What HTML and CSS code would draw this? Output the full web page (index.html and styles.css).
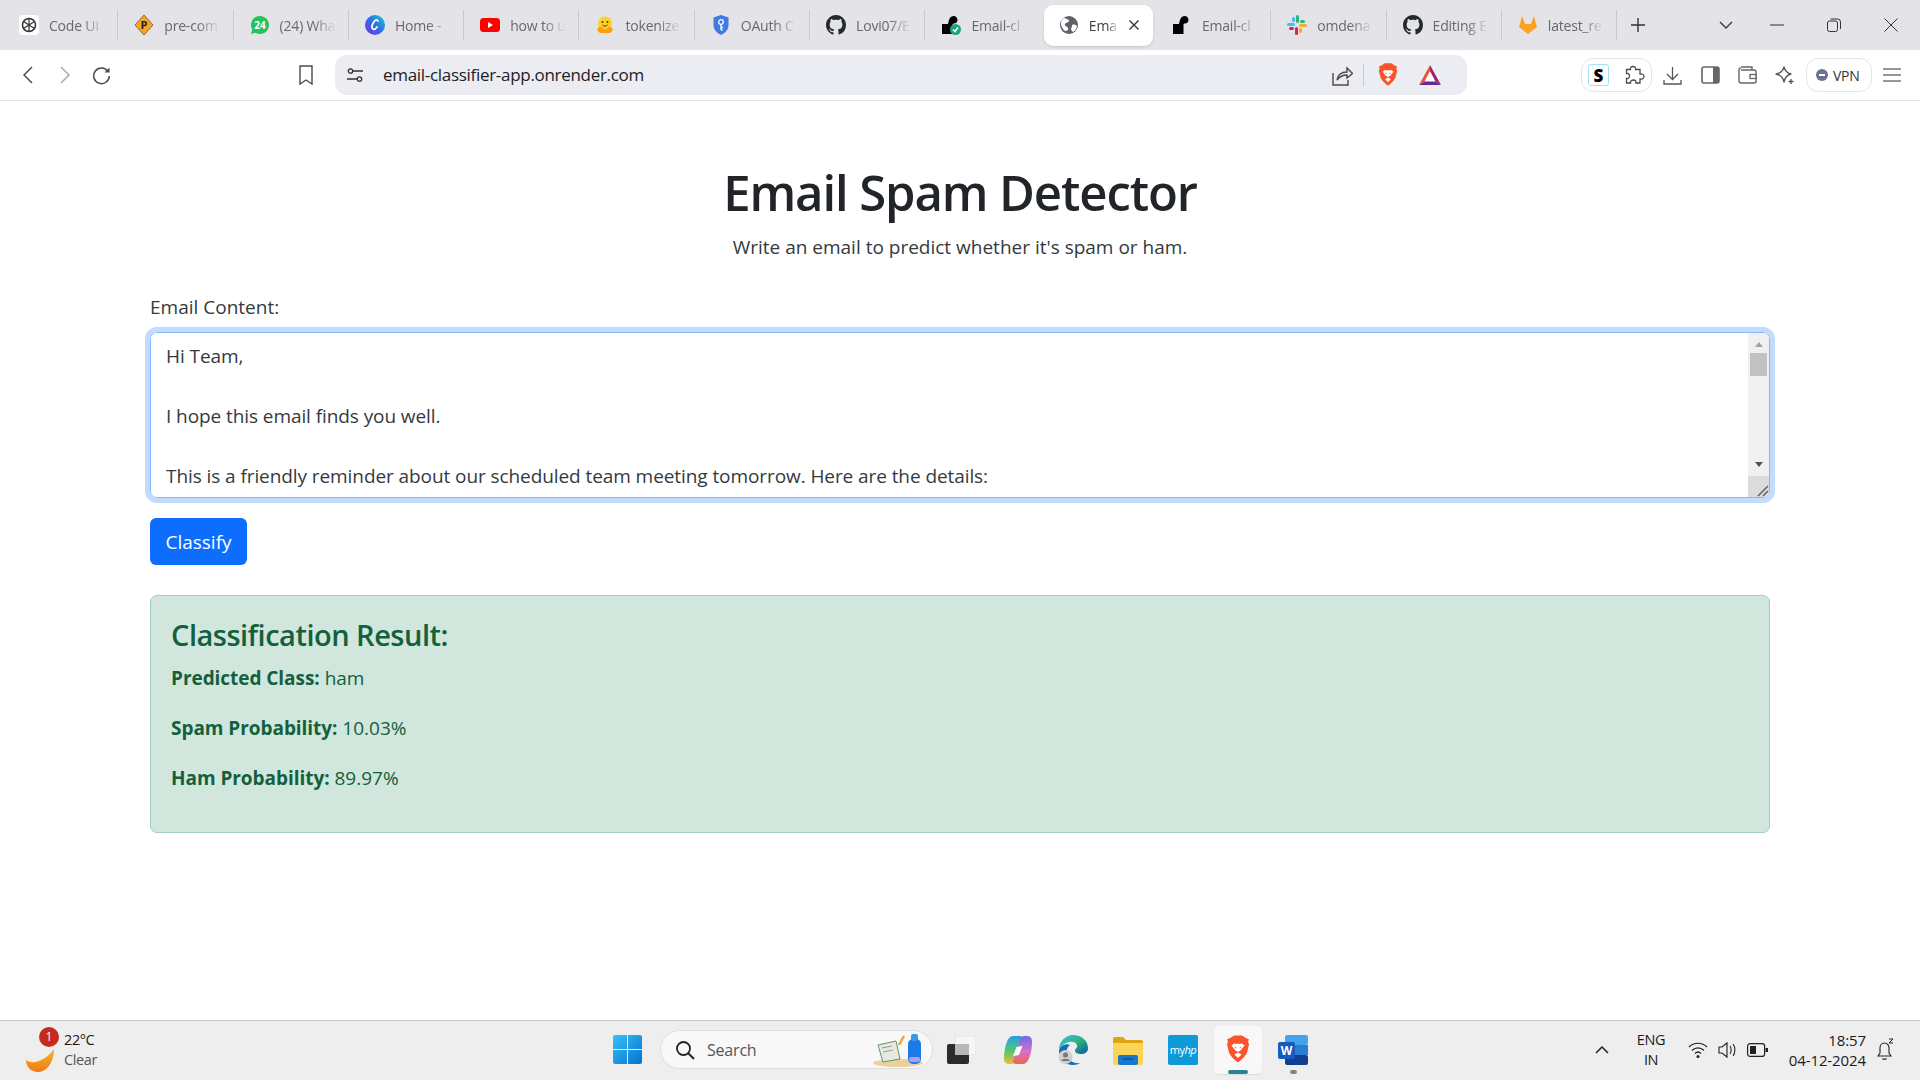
FILE: index.html
```html
<!DOCTYPE html>
<html lang="en">
<head>
    <meta charset="UTF-8">
    <title>Email Spam Detector</title>
    <link rel="stylesheet" href="styles.css">
</head>
<body>
    <svg class="defs" width="0" height="0">
        <symbol id="github" viewBox="0 0 16 16"><path fill="#24292f" d="M8 0C3.58 0 0 3.58 0 8c0 3.54 2.29 6.53 5.47 7.59.4.07.55-.17.55-.38 0-.19-.01-.82-.01-1.49-2.01.37-2.53-.49-2.69-.94-.09-.23-.48-.94-.82-1.13-.28-.15-.68-.52-.01-.53.63-.01 1.08.58 1.23.82.72 1.21 1.87.87 2.33.66.07-.52.28-.87.51-1.07-1.78-.2-3.64-.89-3.64-3.95 0-.87.31-1.59.82-2.15-.08-.2-.36-1.02.08-2.12 0 0 .67-.21 2.2.82.64-.18 1.32-.27 2-.27.68 0 1.36.09 2 .27 1.53-1.04 2.2-.82 2.2-.82.44 1.1.16 1.92.08 2.12.51.56.82 1.27.82 2.15 0 3.07-1.87 3.75-3.65 3.95.29.25.54.73.54 1.48 0 1.07-.01 1.93-.01 2.2 0 .21.15.46.55.38A8.013 8.013 0 0016 8c0-4.42-3.58-8-8-8z"/></symbol>
        <symbol id="render" viewBox="0 0 20 20"><path fill="#000" d="M1 9h6c.5-2 .6-3 1.400-5C9.200 2 11 1 12.500 1 15 1 16.500 3 16.500 5c0 2-1.500 3.500-3.500 3.500-1 0-1.500.5-1.500 1.500V19H1z"/></symbol>
        <symbol id="brave" viewBox="0 0 24 28"><path fill="#fb542b" d="M5 2 8 0h8l3 2 4 2-1 2 1 3-2 8c-1 3-6 8-9 10-3-2-8-7-9-10L1 9l1-3-1-2z"/><path fill="#fff" d="M12 16.500 9 14.500 5.500 10l2.500-2 3 .5 1-.5 1 .5 3-.5 2.500 2L15 14.500zM8.500 19l3.500-2 3.500 2-3.500 3.500z"/><path fill="#fb542b" d="M8 11l2.500 1-.5 1zM16 11l-2.500 1 .5 1z"/></symbol>
    </svg>

    <header class="tab-strip">
        <div class="tab">
            <svg class="fav" viewBox="0 0 20 20"><rect width="20" height="20" rx="4" fill="#fff"/><circle cx="10" cy="10" r="6.500" fill="none" stroke="#333" stroke-width="1.500"/><path d="M10 3.500v13M4.500 6.500l11 7M15.500 6.500l-11 7" stroke="#333" stroke-width="1.200"/></svg>
            <span class="tab-title">Code UI</span>
        </div>
        <div class="tab">
            <svg class="fav" viewBox="0 0 20 20"><path d="M10 0l9 10-9 10-9-10z" fill="#f4a62a" stroke="#7a5310" stroke-width=".8"/><text x="10" y="14" text-anchor="middle" class="svg-bold" font-size="11" fill="#222">P</text></svg>
            <span class="tab-title">pre-com</span>
        </div>
        <div class="tab">
            <svg class="fav" viewBox="0 0 20 20"><path d="M10 1a9 9 0 00-7.700 13.600L1 19l4.500-1.200A9 9 0 1010 1z" fill="#25c15a"/><text x="10" y="13.500" text-anchor="middle" class="svg-bold" font-size="10" fill="#fff">24</text></svg>
            <span class="tab-title">(24) Wha</span>
        </div>
        <div class="tab">
            <svg class="fav" viewBox="0 0 20 20"><defs><linearGradient id="canva" x1="0" y1="1" x2="1" y2="0"><stop offset="0" stop-color="#7d2ae8"/><stop offset=".5" stop-color="#2f6fe4"/><stop offset="1" stop-color="#19c8d6"/></linearGradient></defs><circle cx="10" cy="10" r="10" fill="url(#canva)"/><path d="M13 6c-1-2-3-1-4.500 1.500S6.500 13 8 14c1.500.8 3-.5 4-2" fill="none" stroke="#fff" stroke-width="1.700" stroke-linecap="round"/></svg>
            <span class="tab-title">Home -</span>
        </div>
        <div class="tab">
            <svg class="fav" viewBox="0 0 20 20"><rect y="3" width="20" height="14" rx="3.500" fill="#f00"/><path d="M8 7l5 3-5 3z" fill="#fff"/></svg>
            <span class="tab-title">how to u</span>
        </div>
        <div class="tab">
            <svg class="fav" viewBox="0 0 20 20"><circle cx="10" cy="8.500" r="7" fill="#ffd21e"/><path d="M2 15c1-3 3-4 4-3l4 3 4-3c1-1 3 0 4 3l-3 3H5z" fill="#ff9d0b"/><circle cx="7.500" cy="7" r="1" fill="#3a3b45"/><circle cx="12.500" cy="7" r="1" fill="#3a3b45"/><path d="M7.500 10c1.500 1.500 3.500 1.500 5 0" fill="none" stroke="#3a3b45"/></svg>
            <span class="tab-title">tokenize</span>
        </div>
        <div class="tab">
            <svg class="fav" viewBox="0 0 20 20"><path d="M10 0l7.500 2.500V10c0 5-4 8.500-7.500 10C6.500 18.500 2.500 15 2.500 10V2.500z" fill="#3f7be0"/><circle cx="10" cy="7" r="2.300" fill="none" stroke="#fff" stroke-width="1.300"/><path d="M10 9v6M10 12.500h2M10 15h1.500" stroke="#fff" stroke-width="1.300"/></svg>
            <span class="tab-title">OAuth C</span>
        </div>
        <div class="tab">
            <svg class="fav"><use href="#github"/></svg>
            <span class="tab-title">Lovi07/E</span>
        </div>
        <div class="tab no-sep">
            <svg class="fav" viewBox="0 0 20 20"><use href="#render" width="20" height="20"/><circle cx="14.500" cy="14.500" r="5.500" fill="#14a67c"/><path d="M12 14.500l2 2 3-4" fill="none" stroke="#fff" stroke-width="1.500"/></svg>
            <span class="tab-title">Email-cl</span>
        </div>
        <div class="tab active">
            <svg class="fav" viewBox="0 0 20 20"><circle cx="10" cy="10" r="9" fill="#5f6368"/><path d="M5 3c2 1 5 1 5 3s-3 1-4 3 2 2 3 4-1 3-3 3c-1-1-4-4-4-7s1-5 3-6zM13 10c2-1 4 0 5 1-.5 3-2 5-4 6-1-1-2-2-2-3s1-1 1-4z" fill="#fff"/></svg>
            <span class="tab-title short">Ema</span>
            <svg class="tab-close" viewBox="0 0 12 12"><path d="M1.500 1.500l9 9M10.500 1.500l-9 9" stroke="#333" stroke-width="1.400"/></svg>
        </div>
        <div class="tab">
            <svg class="fav"><use href="#render"/></svg>
            <span class="tab-title">Email-cl</span>
        </div>
        <div class="tab">
            <svg class="fav" viewBox="0 0 20 20"><rect x="0" y="8" width="8" height="3" rx="1.500" fill="#36c5f0"/><rect x="5" y="2" width="3" height="5" rx="1.500" fill="#36c5f0"/><rect x="9" y="0" width="3" height="8" rx="1.500" fill="#2eb67d"/><rect x="13" y="5" width="5" height="3" rx="1.500" fill="#2eb67d"/><rect x="12" y="9" width="8" height="3" rx="1.500" fill="#ecb22e"/><rect x="12" y="13" width="3" height="5" rx="1.500" fill="#ecb22e"/><rect x="8" y="12" width="3" height="8" rx="1.500" fill="#e01e5a"/><rect x="2" y="12" width="5" height="3" rx="1.500" fill="#e01e5a"/></svg>
            <span class="tab-title">omdena</span>
        </div>
        <div class="tab">
            <svg class="fav"><use href="#github"/></svg>
            <span class="tab-title">Editing E</span>
        </div>
        <div class="tab">
            <svg class="fav" viewBox="0 0 20 20"><path d="M10 19L1 12l1-3 2-8 3 8h6l3-8 2 8 1 3z" fill="#fca326"/></svg>
            <span class="tab-title">latest_re</span>
        </div>
        <button class="new-tab">
            <svg width="14" height="14" viewBox="0 0 14 14"><path d="M7 0v14M0 7h14" stroke="#333" stroke-width="1.400"/></svg>
        </button>
        <div class="window-controls">
            <svg class="chevron" width="14" height="8" viewBox="0 0 14 8"><path d="M1 1l6 6 6-6" fill="none" stroke="#444" stroke-width="1.500"/></svg>
            <div class="win-btn"><svg width="14" height="2" viewBox="0 0 14 2"><path d="M0 1h14" stroke="#333"/></svg></div>
            <div class="win-btn"><svg width="14" height="14" viewBox="0 0 14 14"><rect x=".5" y="3" width="10" height="10.500" rx="2" fill="none" stroke="#333"/><path d="M3.500 1h7a3 3 0 013 3v7" fill="none" stroke="#333"/></svg></div>
            <div class="win-btn"><svg width="14" height="14" viewBox="0 0 14 14"><path d="M.5.5l13 13M13.500.5l-13 13" stroke="#333"/></svg></div>
        </div>
    </header>

    <div class="toolbar">
        <div class="nav-btn"><svg width="10" height="18" viewBox="0 0 10 18"><path d="M9 1L1 9l8 8" fill="none" stroke="#4a4a4f" stroke-width="1.500"/></svg></div>
        <div class="nav-btn"><svg width="10" height="18" viewBox="0 0 10 18"><path d="M1 1l8 8-8 8" fill="none" stroke="#a8a8ad" stroke-width="1.500"/></svg></div>
        <div class="nav-btn"><svg width="19" height="19" viewBox="0 0 19 19"><path d="M16 5.500A7.800 7.800 0 1017.300 10" fill="none" stroke="#4a4a4f" stroke-width="1.500"/><path d="M17.500 1.500v5h-5z" fill="#4a4a4f"/></svg></div>
        <div class="nav-btn bookmark"><svg width="14" height="20" viewBox="0 0 14 20"><path d="M1 1h12v18l-6-4-6 4z" fill="none" stroke="#4a4a4f" stroke-width="1.400"/></svg></div>

        <div class="address-bar">
            <svg class="tune" width="18" height="18" viewBox="0 0 18 18"><circle cx="4.500" cy="5" r="2.200" fill="none" stroke="#333" stroke-width="1.300"/><circle cx="13.500" cy="13" r="2.200" fill="none" stroke="#333" stroke-width="1.300"/><path d="M7 5h10M1 13h10" stroke="#333" stroke-width="1.300"/></svg>
            <span class="url">email-classifier-app.onrender.com</span>
            <svg class="share" width="21" height="21" viewBox="0 0 21 21"><path d="M1 8v12h15v-5" fill="none" stroke="#4a4a4f" stroke-width="1.400"/><path d="M5 15c1-6 5-8 10-8V3l5.500 5.500L15 13V10c-4 0-7 1-10 5z" fill="none" stroke="#4a4a4f" stroke-width="1.400"/></svg>
            <span class="addr-sep"></span>
            <svg class="brave-shield" width="20" height="24"><use href="#brave"/></svg>
            <svg class="bat" width="24" height="22" viewBox="0 0 24 22"><path d="M12 1L1 21h22z" fill="#fff"/><path d="M12 1L1 21l5.500-3.500L12 7z" fill="#f0512f"/><path d="M12 1l11 20-5.500-3.500L12 7z" fill="#9e1f63"/><path d="M1 21h22l-5.500-3.500h-11z" fill="#662d91"/></svg>
        </div>

        <div class="ext-group">
            <span class="ext-s">S</span>
            <svg width="20" height="20" viewBox="0 0 20 20"><path d="M8 1.500c2 0 3 1.500 2.500 3H15v4.500c2-.5 4 .5 4 2.500s-2 3-4 2.500V18h-4c.5-2-1-3-2.500-3S5 16 5.500 18H1.500v-4.500c2 .5 3-1 3-2.500S3.500 8 1.500 8.500V4.500h4C5 3 6 1.500 8 1.500z" fill="none" stroke="#4a4a4f" stroke-width="1.300"/></svg>
        </div>
        <div class="tool-btn dl"><svg width="19" height="19" viewBox="0 0 19 19"><path d="M9.500 1v12M4 8l5.500 5.500L15 8M1 14v4h17v-4" fill="none" stroke="#55555a" stroke-width="1.300"/></svg></div>
        <div class="tool-btn"><svg width="19" height="18" viewBox="0 0 19 18"><rect x="1" y="1" width="17" height="16" rx="2" fill="#fff" stroke="#66666b" stroke-width="1.600"/><rect x="12" y="1" width="6" height="16" fill="#66666b"/></svg></div>
        <div class="tool-btn"><svg width="19" height="18" viewBox="0 0 19 18"><path d="M3 1h11v3M1 4a2 2 0 012-2M1 4v11a2 2 0 002 2h13a2 2 0 002-2V6a2 2 0 00-2-2H3" fill="none" stroke="#66666b" stroke-width="1.400"/><rect x="12" y="8.500" width="6" height="4" fill="#fff" stroke="#66666b" stroke-width="1.300"/></svg></div>
        <div class="tool-btn"><svg width="20" height="20" viewBox="0 0 20 20"><path d="M9 2c1 4 3 6 7 7-4 1-6 3-7 8-1-5-3-7-8-8 5-1 7-3 8-7z" fill="none" stroke="#55555a" stroke-width="1.300" stroke-linejoin="round"/><path d="M16 14v5M13.500 16.500h5" stroke="#55555a" stroke-width="1.300"/></svg></div>
        <div class="vpn-pill"><span class="vpn-dot"></span><span class="vpn-text">VPN</span></div>
        <div class="tool-btn menu"><svg width="18" height="14" viewBox="0 0 18 14"><path d="M0 1h18M0 7h18M0 13h18" stroke="#77777c" stroke-width="1.400"/></svg></div>
    </div>

    <main>
        <div class="container">
            <h1>Email Spam Detector</h1>
            <p class="subtitle">Write an email to predict whether it's spam or ham.</p>

            <label class="form-label" for="email">Email Content:</label>
            <div class="textarea-box">
                <textarea id="email" spellcheck="false">Hi Team,

I hope this email finds you well.

This is a friendly reminder about our scheduled team meeting tomorrow. Here are the details:</textarea>
                <div class="scrollbar">
                    <div class="scroll-up"></div>
                    <div class="scroll-thumb"></div>
                    <div class="scroll-down"></div>
                    <div class="scroll-corner">
                        <svg width="12" height="12" viewBox="0 0 12 12"><path d="M1 11L11 1M6 11l5-5" stroke="#555" stroke-width="1.300"/></svg>
                    </div>
                </div>
            </div>

            <button class="btn-classify">Classify</button>

            <div class="result">
                <h4>Classification Result:</h4>
                <p><strong>Predicted Class:</strong> ham</p>
                <p><strong>Spam Probability:</strong> 10.03%</p>
                <p><strong>Ham Probability:</strong> 89.97%</p>
            </div>
        </div>
    </main>

    <footer class="taskbar">
        <div class="weather">
            <div class="weather-icon">
                <svg width="30" height="26" viewBox="0 0 30 26"><defs><linearGradient id="moon" x1="0" y1="0" x2="0" y2="1"><stop offset="0" stop-color="#f9b32a"/><stop offset="1" stop-color="#ef7d14"/></linearGradient></defs><path d="M29 2c0 13-7 23-16 23C6 25 1 20 1 13c4 3 9 3 15 0 5-2 9-6 13-11z" fill="url(#moon)"/></svg>
                <span class="weather-badge">1</span>
            </div>
            <div class="weather-text">
                <span>22°C</span>
                <span class="muted">Clear</span>
            </div>
        </div>

        <div class="task-center">
            <div class="start-btn">
                <svg width="29" height="29" viewBox="0 0 29 29"><defs><linearGradient id="win" x1="0" y1="0" x2="1" y2="1"><stop offset="0" stop-color="#38c2f5"/><stop offset="1" stop-color="#0670d0"/></linearGradient></defs><path d="M0 2a2 2 0 012-2h12v14H0zM15 0h12a2 2 0 012 2v12H15zM0 15h14v14H2a2 2 0 01-2-2zM15 15h14v12a2 2 0 01-2 2H15z" fill="url(#win)"/></svg>
            </div>
            <div class="search-box">
                <svg width="20" height="20" viewBox="0 0 20 20"><circle cx="8.500" cy="8.500" r="6.500" fill="none" stroke="#222" stroke-width="1.800"/><path d="M13 13l6 6" stroke="#222" stroke-width="2"/></svg>
                <span class="search-text">Search</span>
                <svg class="search-art" width="52" height="34" viewBox="0 0 52 34"><ellipse cx="26" cy="30" rx="25" ry="4" fill="#eccf9c"/><path d="M6 12l18-4 4 18-17 3z" fill="#e8e8e2" stroke="#5c9a5c"/><path d="M10 15l10-2M11 19l10-2" stroke="#999"/><path d="M27 12l5-9" stroke="#f2a33a" stroke-width="2.500"/><rect x="36" y="6" width="13" height="25" rx="5" fill="#1a7de6"/><rect x="39" y="1" width="7" height="7" rx="2" fill="#3a96f0"/><rect x="37" y="24" width="11" height="5" rx="2" fill="#b69bf0"/></svg>
            </div>
            <div class="task-app first">
                <svg width="30" height="28" viewBox="0 0 30 28"><rect x="9" y="0" width="21" height="19" rx="2" fill="#f6f6f6" stroke="#e2e2e2"/><rect x="1" y="8" width="22" height="20" rx="2" fill="#2b2b2b"/><rect x="9" y="8" width="14" height="11" fill="#b8b8b8"/></svg>
            </div>
            <div class="task-app">
                <svg width="30" height="30" viewBox="0 0 30 30"><defs><linearGradient id="cop1" x1="0" y1="0" x2="0" y2="1"><stop offset="0" stop-color="#2a9de8"/><stop offset=".55" stop-color="#58c86a"/><stop offset="1" stop-color="#f4b73a"/></linearGradient><linearGradient id="cop2" x1="0" y1="0" x2="0" y2="1"><stop offset="0" stop-color="#6a6be8"/><stop offset=".55" stop-color="#d66fd0"/><stop offset="1" stop-color="#f2654a"/></linearGradient></defs><path d="M10 1h7c2 0 3 1 3 3L12 27c-1 1.500-2 2-4 2H6c-4 0-5-3-5-6C1 14 4 1 10 1z" fill="url(#cop1)"/><path d="M20 29h-7c-2 0-3-1-3-3L18 3c1-1.500 2-2 4-2h2c4 0 5 3 5 6 0 9-3 22-9 22z" fill="url(#cop2)"/><path d="M13.500 12l6-1-3.500 9-6 1z" fill="#fff"/></svg>
            </div>
            <div class="task-app">
                <svg width="30" height="30" viewBox="0 0 30 30"><defs><linearGradient id="edge" x1="0" y1="0" x2="1" y2="1"><stop offset="0" stop-color="#35c1f1"/><stop offset=".5" stop-color="#2fb37e"/><stop offset="1" stop-color="#0c59a4"/></linearGradient></defs><path d="M15 0c9 0 15 6 15 13 0 4-3 6-7 6-3 0-6-1-6-3 0-3 3-3 2-6-1-3-5-4-8-3C6 8 2 12 1 15 1 7 7 0 15 0z" fill="url(#edge)"/><path d="M1 15c2-5 7-7 11-5-3 2-4 6-3 10 1 5 6 9 13 8-2 1-4 2-7 2C7 30 1 24 1 15z" fill="#0e6fbe"/><circle cx="7.500" cy="22" r="7" fill="#d0d0d0"/><circle cx="7.500" cy="20" r="2.500" fill="#777"/><path d="M3 26c1-3 8-3 9 0z" fill="#777"/></svg>
            </div>
            <div class="task-app">
                <svg width="30" height="30" viewBox="0 0 30 30"><path d="M0 4a2 2 0 012-2h8l3 3h15a2 2 0 012 2v3H0z" fill="#e0a410"/><path d="M0 8h30v20a2 2 0 01-2 2H2a2 2 0 01-2-2z" fill="#fbd45a"/><rect x="5" y="20" width="20" height="10" rx="2" fill="#1677cc"/><path d="M10 24h10" stroke="#0b4f91" stroke-width="1.500"/></svg>
            </div>
            <div class="task-app">
                <div class="myhp">my<em>hp</em></div>
            </div>
            <div class="task-app running">
                <svg width="24" height="29"><use href="#brave"/></svg>
                <span class="run-bar"></span>
            </div>
            <div class="task-app">
                <svg width="30" height="30" viewBox="0 0 30 30"><rect x="7" y="0" width="23" height="10" rx="2" fill="#41a5ee"/><rect x="7" y="10" width="23" height="10" fill="#2b7cd3"/><rect x="7" y="20" width="23" height="10" rx="2" fill="#103f91"/><rect y="7" width="17" height="17" rx="2" fill="#185abd"/><text x="8.500" y="20" text-anchor="middle" class="svg-bold" font-size="12" fill="#fff">W</text></svg>
                <span class="run-dot"></span>
            </div>
        </div>

        <div class="tray">
            <svg class="tray-up" width="14" height="8" viewBox="0 0 14 8"><path d="M1 7l6-6 6 6" fill="none" stroke="#222" stroke-width="1.500"/></svg>
            <div class="lang">
                <span>ENG</span>
                <span>IN</span>
            </div>
            <svg class="tray-icon" width="20" height="18" viewBox="0 0 20 18"><path d="M1 6c5-5 13-5 18 0M4 9.500c3.500-3.500 8.500-3.500 12 0M7 12.500c2-2 4-2 6 0" fill="none" stroke="#222" stroke-width="1.200"/><circle cx="10" cy="15.500" r="1.500" fill="#222"/></svg>
            <svg class="tray-icon" width="19" height="18" viewBox="0 0 19 18"><path d="M1 6h3l5-4v14l-5-4H1zM12 5c1.500 2 1.500 6 0 8M15 3c2.500 3 2.500 9 0 12" fill="none" stroke="#222" stroke-width="1.100"/></svg>
            <svg class="tray-icon" width="21" height="14" viewBox="0 0 21 14"><rect x=".6" y=".6" width="17" height="12.800" rx="2.500" fill="none" stroke="#222" stroke-width="1.200"/><rect x="3" y="3" width="6" height="8" fill="#222"/><rect x="18.500" y="5" width="2.500" height="4" fill="#222"/></svg>
            <div class="clock">
                <span>18:57</span>
                <span>04-12-2024</span>
            </div>
            <svg class="tray-bell" width="20" height="24" viewBox="0 0 20 24"><path d="M2 18h13l-2-3V10c0-3-2-5-4.500-5S4 7 4 10v5zM6.500 20.500c1 1 3 1 4 0" fill="none" stroke="#222" stroke-width="1.100"/><path d="M13 1h4l-4 4h4" fill="none" stroke="#222"/></svg>
        </div>
    </footer>
</body>
</html>
```

FILE: styles.css
```css
/* Basic Reset and Font */
* {
    margin: 0;
    padding: 0;
    box-sizing: border-box;
}

html, body {
    width: 1920px;
    height: 1080px;
    overflow: hidden;
}

body {
    display: flex;
    flex-direction: column;
    background-color: #fff;
    color: #343a40;
    font-family: "Open Sans", "Noto Sans", sans-serif;
}

.defs {
    position: absolute;
}

.svg-bold {
    font-family: "Open Sans", sans-serif;
    font-weight: 700;
}

/* Tab strip */
.tab-strip {
    height: 50px;
    flex: none;
    display: flex;
    align-items: center;
    padding-left: 3px;
    background-color: #e3e3e8;
}

.tab {
    width: 115.300px;
    height: 30px;
    flex: none;
    display: flex;
    align-items: center;
    padding-left: 16px;
    border-right: 1px solid #c9c9cf;
}

.tab.no-sep {
    border-right-color: transparent;
}

.tab.active {
    height: 41px;
    width: 109px;
    margin: 0 3.150px;
    padding-left: 15px;
    border: none;
    border-radius: 9px;
    background-color: #fff;
    box-shadow: 0 1px 3px rgba(0, 0, 0, 0.12);
}

.fav {
    width: 20px;
    height: 20px;
    flex: none;
}

.tab-title {
    width: 56px;
    margin-left: 10px;
    overflow: hidden;
    white-space: nowrap;
    font-size: 14px;
    letter-spacing: -0.2px;
    color: #68686e;
    -webkit-mask-image: linear-gradient(90deg, #000 60%, transparent);
    mask-image: linear-gradient(90deg, #000 60%, transparent);
}

.tab-title.short {
    width: 30px;
    color: #3d3d42;
}

.tab-close {
    width: 12px;
    height: 12px;
    margin-left: 9px;
}

.new-tab {
    width: 42px;
    height: 30px;
    flex: none;
    display: flex;
    align-items: center;
    justify-content: center;
    border: none;
    background: none;
}

.window-controls {
    display: flex;
    align-items: center;
    margin-left: auto;
    padding-right: 1px;
}

.chevron {
    margin-right: 15px;
}

.win-btn {
    width: 57px;
    display: flex;
    align-items: center;
    justify-content: center;
}

/* Toolbar */
.toolbar {
    height: 51px;
    flex: none;
    display: flex;
    align-items: center;
    padding-left: 9px;
    border-bottom: 1px solid #e3e3e8;
    background-color: #fff;
}

.nav-btn {
    width: 37px;
    height: 40px;
    flex: none;
    display: flex;
    align-items: center;
    justify-content: center;
}

.nav-btn.bookmark {
    margin-left: 167px;
}

.address-bar {
    width: 1132px;
    height: 40px;
    flex: none;
    margin-left: 11px;
    display: flex;
    align-items: center;
    padding-left: 11px;
    border-radius: 12px;
    background-color: #ecedf2;
}

.url {
    margin-left: 19px;
    padding-bottom: 2px;
    font-size: 17px;
    letter-spacing: -0.3px;
    color: #212126;
}

.share {
    margin-left: auto;
}

.addr-sep {
    width: 1px;
    height: 22px;
    margin-left: 10px;
    background-color: #c9c9cf;
}

.brave-shield {
    margin-left: 14px;
}

.bat {
    margin-left: 20px;
    margin-right: 25px;
}

.ext-group {
    width: 71px;
    height: 34px;
    flex: none;
    margin-left: 114px;
    display: flex;
    align-items: center;
    gap: 16px;
    padding-left: 6px;
    border: 1px solid #e5e5ea;
    border-radius: 12px;
}

.ext-s {
    width: 21px;
    height: 22px;
    display: flex;
    align-items: center;
    justify-content: center;
    border: 1px solid #9fe3f5;
    border-radius: 3px;
    font-size: 17px;
    font-weight: 800;
    color: #000;
}

.tool-btn {
    width: 37.500px;
    flex: none;
    display: flex;
    justify-content: center;
}

.tool-btn.dl {
    margin-left: 2px;
}

.vpn-pill {
    width: 66px;
    height: 34px;
    flex: none;
    margin-left: 2px;
    display: flex;
    align-items: center;
    gap: 5px;
    padding-left: 9px;
    border: 1px solid #e5e5ea;
    border-radius: 12px;
}

.vpn-dot {
    width: 12px;
    height: 12px;
    border-radius: 50%;
    background-color: #6d7196;
    position: relative;
}

.vpn-dot::after {
    content: "";
    position: absolute;
    left: 3px;
    top: 5px;
    width: 6px;
    height: 2px;
    background-color: #fff;
}

.vpn-text {
    font-size: 14px;
    letter-spacing: -0.3px;
    color: #333;
}

.tool-btn.menu {
    width: 40px;
}

/* Page content */
main {
    flex: 1;
    padding-top: 61px;
}

.container {
    width: 1620px;
    margin: 0 auto;
}

h1 {
    font-size: 49px;
    font-weight: 600;
    line-height: 60px;
    letter-spacing: -1.100px;
    text-align: center;
    color: #212529;
    margin-bottom: 10px;
}

.subtitle {
    font-size: 19px;
    line-height: 30px;
    text-align: center;
    margin-bottom: 30px;
}

.form-label {
    display: block;
    font-size: 19px;
    line-height: 30px;
    margin-bottom: 10px;
}

.textarea-box {
    height: 166px;
    display: flex;
    overflow: hidden;
    border: 1px solid #86b7fe;
    border-radius: 7px;
    outline: 5px solid #c2dbfe;
    outline-offset: 0;
    background-color: #fff;
}

textarea {
    flex: 1;
    height: 100%;
    padding: 8px 15px;
    border: none;
    outline: none;
    resize: none;
    overflow: hidden;
    font-family: inherit;
    font-size: 19px;
    line-height: 30px;
    letter-spacing: -0.08px;
    color: #343a40;
}

.scrollbar {
    width: 21px;
    flex: none;
    display: flex;
    flex-direction: column;
    align-items: center;
    background-color: #f0f0f0;
}

.scroll-up {
    width: 0;
    height: 0;
    margin-top: 9px;
    border-left: 4px solid transparent;
    border-right: 4px solid transparent;
    border-bottom: 5px solid #a3a3a3;
}

.scroll-thumb {
    width: 17px;
    height: 23px;
    margin-top: 6px;
    background-color: #c1c1c1;
}

.scroll-down {
    width: 0;
    height: 0;
    margin-top: auto;
    margin-bottom: 9px;
    border-left: 4px solid transparent;
    border-right: 4px solid transparent;
    border-top: 5px solid #505050;
}

.scroll-corner {
    width: 21px;
    height: 21px;
    display: flex;
    align-items: flex-end;
    justify-content: flex-end;
    background-color: #dcdcdc;
}

.btn-classify {
    display: block;
    width: 97px;
    height: 47px;
    margin-top: 20px;
    padding-top: 1px;
    border: none;
    border-radius: 6px;
    background-color: #0d6efd;
    color: #fff;
    font-family: inherit;
    font-size: 19px;
}

.result {
    height: 238px;
    margin-top: 30px;
    padding: 21px 20px;
    border: 1px solid #a3cfbb;
    border-radius: 7px;
    background-color: #d1e7dd;
    color: #14603c;
}

.result h4 {
    font-size: 29px;
    font-weight: 600;
    line-height: 36px;
    letter-spacing: -0.5px;
    margin-bottom: 10px;
}

.result p {
    font-size: 19px;
    line-height: 30px;
    margin-bottom: 20px;
}

.result strong {
    font-weight: 700;
    letter-spacing: -0.05px;
}

/* Taskbar */
.taskbar {
    height: 60px;
    flex: none;
    display: flex;
    align-items: center;
    padding-bottom: 2px;
    border-top: 1px solid #c6c6c6;
    background-color: #eeeeee;
}

.weather {
    width: 600px;
    flex: none;
    display: flex;
    align-items: center;
    padding-left: 25px;
}

.weather-icon {
    width: 39px;
    height: 46px;
    position: relative;
    display: flex;
    align-items: flex-end;
}

.weather-badge {
    position: absolute;
    top: 0;
    left: 14px;
    width: 20px;
    height: 20px;
    display: flex;
    align-items: center;
    justify-content: center;
    border-radius: 50%;
    background-color: #c42b1c;
    color: #fff;
    font-size: 12px;
}

.weather-text, .lang, .clock {
    display: flex;
    flex-direction: column;
    font-size: 14.500px;
    line-height: 20px;
    letter-spacing: -0.4px;
    color: #1b1b1b;
}

.muted {
    color: #555;
}

.task-center {
    display: flex;
    align-items: center;
    flex: none;
}

.start-btn {
    width: 55px;
    display: flex;
    justify-content: center;
}

.search-box {
    width: 273px;
    height: 39px;
    margin-left: 5px;
    display: flex;
    align-items: center;
    padding-left: 14px;
    border: 1px solid #dedede;
    border-radius: 20px;
    background-color: #f8f8f8;
}

.search-text {
    margin-left: 12px;
    font-size: 16px;
    letter-spacing: -0.2px;
    color: #555;
}

.search-art {
    margin-left: auto;
    margin-right: 8px;
}

.task-app {
    width: 55px;
    height: 48px;
    position: relative;
    display: flex;
    align-items: center;
    justify-content: center;
}

.task-app.first {
    margin-right: 2.500px;
}

.task-app.running {
    width: 48px;
    margin: 0 3.500px;
    border-radius: 5px;
    background-color: #f8f8f8;
    box-shadow: 0 1px 1px rgba(0, 0, 0, 0.08);
}

.run-bar {
    position: absolute;
    bottom: 0;
    left: 14px;
    width: 20px;
    height: 4px;
    border-radius: 2px;
    background-color: #2a8496;
}

.run-dot {
    position: absolute;
    bottom: 0;
    left: 24px;
    width: 7px;
    height: 4px;
    border-radius: 2px;
    background-color: #858585;
}

.myhp {
    width: 30px;
    height: 30px;
    display: flex;
    align-items: center;
    justify-content: center;
    border-radius: 2px;
    background-color: #0e9ad8;
    color: #fff;
    font-size: 11px;
    letter-spacing: -0.5px;
}

.tray {
    flex: 1;
    display: flex;
    align-items: center;
    justify-content: flex-end;
    padding-right: 24px;
}

.tray-up {
    margin-right: 17px;
}

.lang {
    width: 50px;
    margin-right: 12px;
    align-items: center;
}

.tray-icon {
    margin-right: 10px;
}

.clock {
    width: 86px;
    margin-left: 2px;
    align-items: flex-end;
    font-size: 15px;
    letter-spacing: -0.1px;
}

.tray-bell {
    margin-left: 10px;
}
```
